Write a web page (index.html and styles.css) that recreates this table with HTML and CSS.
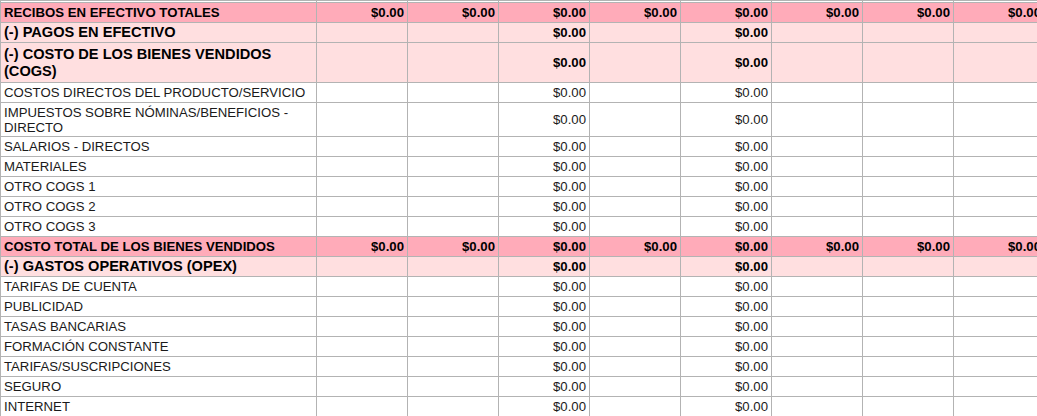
FILE: index.html
```html
<!DOCTYPE html>
<html lang="es">
<head>
<meta charset="utf-8">
<title>Flujo de caja</title>
<link rel="stylesheet" href="styles.css">
</head>
<body>
<table class="sheet">
  <colgroup>
    <col class="c-label"><col class="c-num"><col class="c-num"><col class="c-num"><col class="c-num"><col class="c-num"><col class="c-num"><col class="c-num"><col class="c-num">
  </colgroup>
  <tbody>
    <tr class="r-stub"><td></td><td></td><td></td><td></td><td></td><td></td><td></td><td></td><td></td></tr>
    <tr class="total">
      <td>RECIBOS EN EFECTIVO TOTALES</td>
      <td class="n">$0.00</td><td class="n">$0.00</td><td class="n">$0.00</td><td class="n">$0.00</td><td class="n">$0.00</td><td class="n">$0.00</td><td class="n">$0.00</td><td class="n">$0.00</td>
    </tr>
    <tr class="section">
      <td>(-) PAGOS EN EFECTIVO</td>
      <td></td><td></td><td class="n">$0.00</td><td></td><td class="n">$0.00</td><td></td><td></td><td></td>
    </tr>
    <tr class="section tall">
      <td>(-) COSTO DE LOS BIENES VENDIDOS (COGS)</td>
      <td></td><td></td><td class="n">$0.00</td><td></td><td class="n">$0.00</td><td></td><td></td><td></td>
    </tr>
    <tr><td>COSTOS DIRECTOS DEL PRODUCTO/SERVICIO</td><td></td><td></td><td class="n">$0.00</td><td></td><td class="n">$0.00</td><td></td><td></td><td></td></tr>
    <tr class="wrap"><td>IMPUESTOS SOBRE NÓMINAS/BENEFICIOS - DIRECTO</td><td></td><td></td><td class="n">$0.00</td><td></td><td class="n">$0.00</td><td></td><td></td><td></td></tr>
    <tr><td>SALARIOS - DIRECTOS</td><td></td><td></td><td class="n">$0.00</td><td></td><td class="n">$0.00</td><td></td><td></td><td></td></tr>
    <tr><td>MATERIALES</td><td></td><td></td><td class="n">$0.00</td><td></td><td class="n">$0.00</td><td></td><td></td><td></td></tr>
    <tr><td>OTRO COGS 1</td><td></td><td></td><td class="n">$0.00</td><td></td><td class="n">$0.00</td><td></td><td></td><td></td></tr>
    <tr><td>OTRO COGS 2</td><td></td><td></td><td class="n">$0.00</td><td></td><td class="n">$0.00</td><td></td><td></td><td></td></tr>
    <tr><td>OTRO COGS 3</td><td></td><td></td><td class="n">$0.00</td><td></td><td class="n">$0.00</td><td></td><td></td><td></td></tr>
    <tr class="total">
      <td>COSTO TOTAL DE LOS BIENES VENDIDOS</td>
      <td class="n">$0.00</td><td class="n">$0.00</td><td class="n">$0.00</td><td class="n">$0.00</td><td class="n">$0.00</td><td class="n">$0.00</td><td class="n">$0.00</td><td class="n">$0.00</td>
    </tr>
    <tr class="section">
      <td>(-) GASTOS OPERATIVOS (OPEX)</td>
      <td></td><td></td><td class="n">$0.00</td><td></td><td class="n">$0.00</td><td></td><td></td><td></td>
    </tr>
    <tr><td>TARIFAS DE CUENTA</td><td></td><td></td><td class="n">$0.00</td><td></td><td class="n">$0.00</td><td></td><td></td><td></td></tr>
    <tr><td>PUBLICIDAD</td><td></td><td></td><td class="n">$0.00</td><td></td><td class="n">$0.00</td><td></td><td></td><td></td></tr>
    <tr><td>TASAS BANCARIAS</td><td></td><td></td><td class="n">$0.00</td><td></td><td class="n">$0.00</td><td></td><td></td><td></td></tr>
    <tr><td>FORMACIÓN CONSTANTE</td><td></td><td></td><td class="n">$0.00</td><td></td><td class="n">$0.00</td><td></td><td></td><td></td></tr>
    <tr><td>TARIFAS/SUSCRIPCIONES</td><td></td><td></td><td class="n">$0.00</td><td></td><td class="n">$0.00</td><td></td><td></td><td></td></tr>
    <tr><td>SEGURO</td><td></td><td></td><td class="n">$0.00</td><td></td><td class="n">$0.00</td><td></td><td></td><td></td></tr>
    <tr><td>INTERNET</td><td></td><td></td><td class="n">$0.00</td><td></td><td class="n">$0.00</td><td></td><td></td><td></td></tr>
  </tbody>
</table>
</body>
</html>
```

FILE: styles.css
```css
html, body {
  margin: 0;
  padding: 0;
  background: #ffffff;
  overflow: hidden;
}

.sheet {
  border-collapse: separate;
  border-spacing: 1px;
  background: #b3b3b3;
  table-layout: fixed;
  width: 1045px;
  font-family: "Liberation Sans", Arial, sans-serif;
  font-size: 13.2px;
  color: #1a1a1a;
}

.c-label { width: 315px; }
.c-num { width: 90px; }

.sheet td {
  background: #ffffff;
  padding: 0 3px;
  height: 19px;
  line-height: 15px;
  vertical-align: middle;
  white-space: normal;
  overflow: hidden;
}

.sheet td.n {
  text-align: right;
  white-space: nowrap;
}

.sheet tr.r-stub td {
  height: 1px;
  line-height: 1px;
  font-size: 1px;
}

.sheet tr.total td {
  background: #ffabb9;
  color: #000000;
  font-weight: bold;
}

.sheet tr.section td {
  background: #ffdfe0;
  color: #000000;
  font-size: 14.6px;
  font-weight: bold;
  line-height: 17px;
}

.sheet tr.section td.n {
  font-size: 13.2px;
}

.sheet tr.tall td {
  height: 39px;
}

.sheet tr.wrap td {
  height: 33px;
}
```
